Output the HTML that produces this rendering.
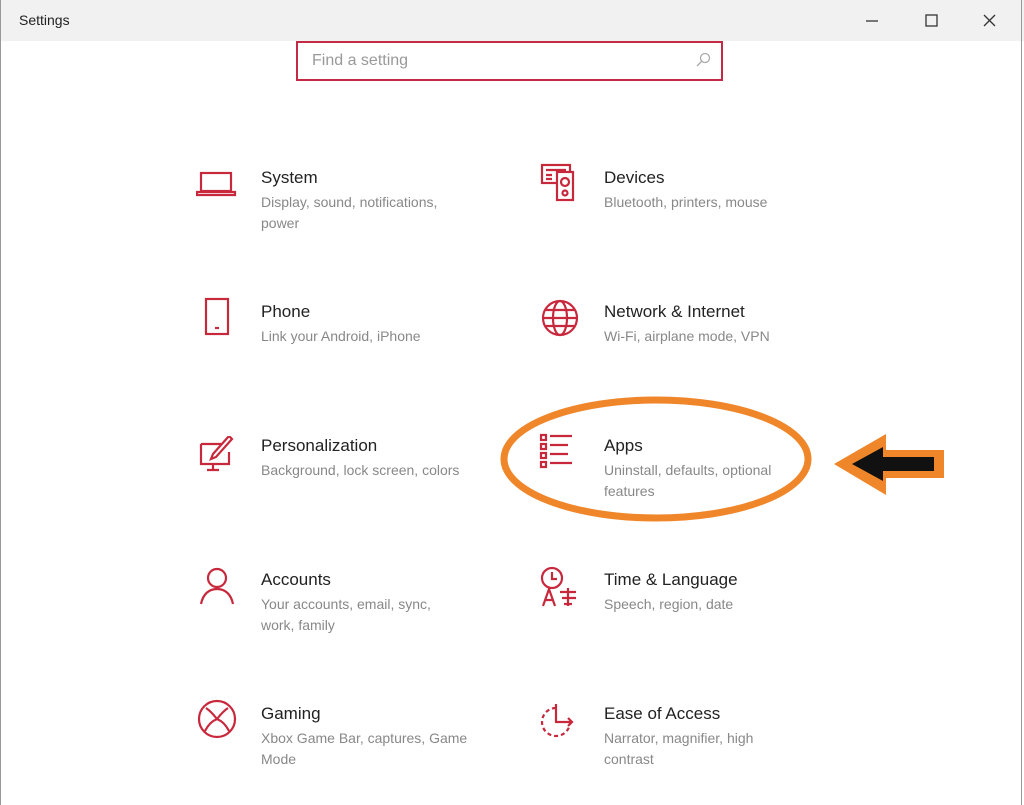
<!DOCTYPE html>
<html><head><meta charset="utf-8"><style>
body{margin:0;width:1024px;height:805px;background:#fff;font-family:"Liberation Sans",sans-serif;position:relative;overflow:hidden}
.tb{position:absolute;left:0;top:0;width:1024px;height:41px;background:#f1f1f1}
.bl{position:absolute;left:0;top:0;width:1px;height:805px;background:#999}
.br{position:absolute;left:1021px;top:0;width:1px;height:805px;background:#999}
.tt{position:absolute;left:19px;top:12px;font-size:14px;color:#222}
.search{position:absolute;left:296px;top:41px;width:423px;height:36px;border:2px solid #c42a45;background:#fff}
.search span{position:absolute;left:14px;top:9px;font-size:16px;color:#999}
.it{position:absolute}
.it b{display:block;font-weight:normal;font-size:17px;color:#222;line-height:20px}
.it i{display:block;font-style:normal;font-size:14px;color:#888;line-height:21px;margin-top:4px;width:210px}
svg.ic{position:absolute;fill:none;stroke:#c8283c;stroke-width:2.2}
</style></head><body>
<div class="tb"></div><div class="bl"></div><div class="br"></div>
<div class="tt">Settings</div>
<svg style="position:absolute;left:860px;top:10px" width="140" height="22" fill="none" stroke="#333" stroke-width="1.3">
<line x1="6" y1="11" x2="18" y2="11"/><rect x="66" y="5" width="11" height="11"/><path d="M124 5l11 11M135 5l-11 11"/></svg>
<div class="search"><span>Find a setting</span>
<svg style="position:absolute;right:10px;top:9px" width="16" height="16" fill="none" stroke="#aaa" stroke-width="1.3"><circle cx="10" cy="6" r="4.5"/><line x1="7" y1="9" x2="2" y2="14"/></svg></div>

<div class="it" style="left:261px;top:168px"><b>System</b><i style="width:200px">Display, sound, notifications, power</i></div>
<div class="it" style="left:604px;top:168px"><b>Devices</b><i>Bluetooth, printers, mouse</i></div>
<div class="it" style="left:261px;top:302px"><b>Phone</b><i>Link your Android, iPhone</i></div>
<div class="it" style="left:604px;top:302px"><b>Network &amp; Internet</b><i>Wi-Fi, airplane mode, VPN</i></div>
<div class="it" style="left:261px;top:436px"><b>Personalization</b><i>Background, lock screen, colors</i></div>
<div class="it" style="left:604px;top:436px"><b>Apps</b><i style="width:190px">Uninstall, defaults, optional features</i></div>
<div class="it" style="left:261px;top:570px"><b>Accounts</b><i style="width:190px">Your accounts, email, sync, work, family</i></div>
<div class="it" style="left:604px;top:570px"><b>Time &amp; Language</b><i>Speech, region, date</i></div>
<div class="it" style="left:261px;top:704px"><b>Gaming</b><i>Xbox Game Bar, captures, Game Mode</i></div>
<div class="it" style="left:604px;top:704px"><b>Ease of Access</b><i style="width:190px">Narrator, magnifier, high contrast</i></div>

<svg class="ic" style="left:196px;top:170px" width="44" height="30"><rect x="5" y="3" width="30" height="18"/><path d="M1 22h38v3H1z"/></svg>
<svg class="ic" style="left:538px;top:162px" width="46" height="40"><rect x="4" y="3" width="28" height="18"/><path d="M8 8h20M8 13h6M8 17h6"/><rect x="19" y="10" width="16" height="28" fill="#fff"/><circle cx="27" cy="20" r="4"/><circle cx="27" cy="31" r="2.5"/></svg>
<svg class="ic" style="left:200px;top:296px" width="36" height="42"><rect x="6" y="3" width="22" height="35"/><line x1="15" y1="32" x2="19" y2="32"/></svg>
<svg class="ic" style="left:538px;top:297px" width="46" height="42"><circle cx="22" cy="21" r="17"/><ellipse cx="22" cy="21" rx="7" ry="17"/><path d="M5 21h34M8 13h28M8 29h28"/></svg>
<svg class="ic" style="left:196px;top:436px" width="44" height="40"><path d="M5 8h20M5 8v20h28v-12"/><path d="M17 28v6M11 34h12"/><path d="M36 3l-16 18-5 2 2-5 16-18z"/></svg>
<svg class="ic" style="left:538px;top:432px" width="46" height="40"><rect x="3" y="3" width="5" height="5"/><rect x="3" y="12" width="5" height="5"/><rect x="3" y="21" width="5" height="5"/><rect x="3" y="30" width="5" height="5"/><path d="M12 4h22M12 13h18M12 22h18M12 31h22"/></svg>
<svg class="ic" style="left:198px;top:566px" width="40" height="42"><circle cx="19" cy="12" r="9"/><path d="M3 38c2-10 8-15 16-15s14 5 16 15"/></svg>
<svg class="ic" style="left:538px;top:564px" width="46" height="44"><circle cx="14" cy="14" r="10"/><path d="M14 8v7h5"/><path d="M5 42l6-17 6 17M7 36h8M22 28h16M30 24v18M24 34h14M26 40h8"/></svg>
<svg class="ic" style="left:196px;top:698px" width="44" height="44"><circle cx="21" cy="21" r="18"/><path d="M10 10c6 4 10 10 11 11c1-1 5-7 11-11M9 33c3-6 7-10 12-12c5 2 9 6 12 12"/></svg>
<svg class="ic" style="left:536px;top:700px" width="46" height="44"><path d="M20 8a14 14 0 1 0 14 14" stroke-dasharray="4 3"/><path d="M20 4v18h16M32 18l4 4-4 4"/></svg>

<svg style="position:absolute;left:0;top:0" width="1024" height="805">
<ellipse cx="656" cy="459" rx="152" ry="59" fill="none" stroke="#f0862a" stroke-width="7"/>
<polygon points="834,464 886,434 886,450 944,450 944,478 886,478 886,495" fill="#f0862a"/>
<polygon points="852,464 883,447 883,457 934,457 934,471 883,471 883,481" fill="#111"/>
</svg>
</body></html>
